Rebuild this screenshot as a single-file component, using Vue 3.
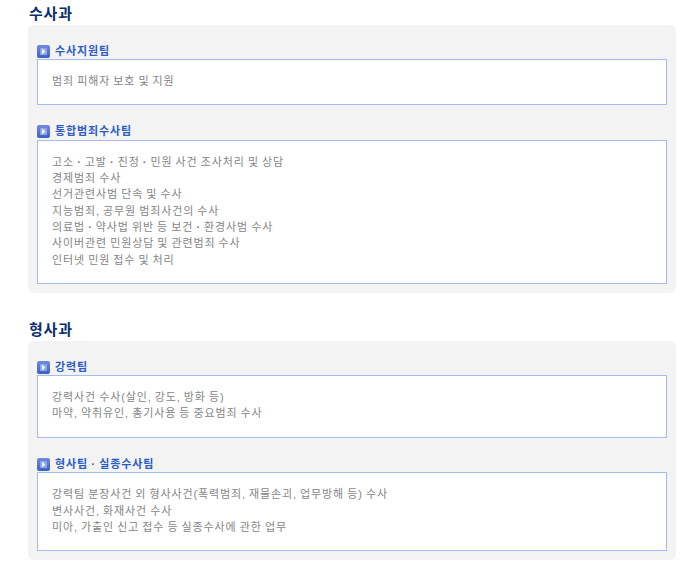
<script setup>
const sections = [
  {
    title: '수사과',
    teams: [
      { name: '수사지원팀', lines: ['범죄 피해자 보호 및 지원'] },
      {
        name: '통합범죄수사팀',
        lines: [
          '고소 · 고발 · 진정 · 민원 사건 조사처리 및 상담',
          '경제범죄 수사',
          '선거관련사범 단속 및 수사',
          '지능범죄, 공무원 범죄사건의 수사',
          '의료법 · 약사법 위반 등 보건 · 환경사범 수사',
          '사이버관련 민원상담 및 관련범죄 수사',
          '인터넷 민원 접수 및 처리',
        ],
      },
    ],
  },
  {
    title: '형사과',
    teams: [
      {
        name: '강력팀',
        lines: ['강력사건 수사(살인, 강도, 방화 등)', '마약, 약취유인, 총기사용 등 중요범죄 수사'],
      },
      {
        name: '형사팀 · 실종수사팀',
        lines: [
          '강력팀 분장사건 외 형사사건(폭력범죄, 재물손괴, 업무방해 등) 수사',
          '변사사건, 화재사건 수사',
          '미아, 가출인 신고 접수 등 실종수사에 관한 업무',
        ],
      },
    ],
  },
]
const parts = (l) => l.split('·')
</script>

<template>
  <div class="page">
    <svg class="defs" width="0" height="0" aria-hidden="true">
      <defs>
        <linearGradient id="bulletFill" x1="0" y1="0" x2="0" y2="1">
          <stop offset="0" stop-color="#6f8be0" />
          <stop offset="1" stop-color="#3d60c6" />
        </linearGradient>
      </defs>
    </svg>
    <section v-for="s in sections" :key="s.title" class="section">
      <h2 class="heading">{{ s.title }}</h2>
      <div class="panel">
        <div v-for="t in s.teams" :key="t.name" class="team">
          <h3 class="team-name">
            <svg class="bullet" width="13" height="13" viewBox="0 0 13 13" aria-hidden="true">
              <rect width="13" height="13" rx="2" fill="url(#bulletFill)" />
              <rect x="3" y="3" width="7" height="7" rx="1" fill="#8ea5ea" />
              <path d="M5 3.5 L8.5 6.5 L5 9.5 Z" fill="#f4f6ff" />
            </svg>
            <span class="team-label">{{ t.name }}</span>
          </h3>
          <div class="box">
            <p v-for="l in t.lines" :key="l" class="line">
              <template v-for="(p, i) in parts(l)" :key="i"><b v-if="i" class="dot">·</b>{{ p }}</template>
            </p>
          </div>
        </div>
      </div>
    </section>
  </div>
</template>

<style scoped>
.page {
  width: 648px;
  padding: 1px 5px 8px 28px;
  font-family: "Liberation Sans", "Noto Sans CJK KR", sans-serif;
}
.defs {
  position: absolute;
}
.section {
  margin-bottom: 24px;
}
.section:last-child {
  margin-bottom: 0;
}
.heading {
  margin: 0 0 0 1px;
  padding-top: 1px;
  font-size: 15px;
  line-height: 23px;
  font-weight: 700;
  letter-spacing: 0.8px;
  color: #0b2f70;
}
.panel {
  padding: 18px 9px 9px;
  background: #f3f3f3;
  border-radius: 6px;
}
.team {
  margin-bottom: 18.5px;
}
.team:last-child {
  margin-bottom: 0;
}
.team-name {
  display: flex;
  align-items: center;
  gap: 5px;
  height: 16px;
  margin: 0;
  font-size: 11px;
  line-height: 16px;
  font-weight: 700;
  letter-spacing: 0.88px;
  word-spacing: -0.6px;
  color: #2c5cc4;
}
.team-label {
  position: relative;
  top: -0.4px;
}
.bullet {
  flex: none;
}
.box {
  padding: 13px 14px 15px;
  background: #fff;
  border: 1px solid #a3bdf2;
}
.line {
  margin: 0;
  font-size: 11px;
  line-height: 16.33px;
  letter-spacing: 0.88px;
  word-spacing: -0.8px;
  color: #858585;
}
.dot {
  font-weight: 700;
  color: #777;
}
</style>
